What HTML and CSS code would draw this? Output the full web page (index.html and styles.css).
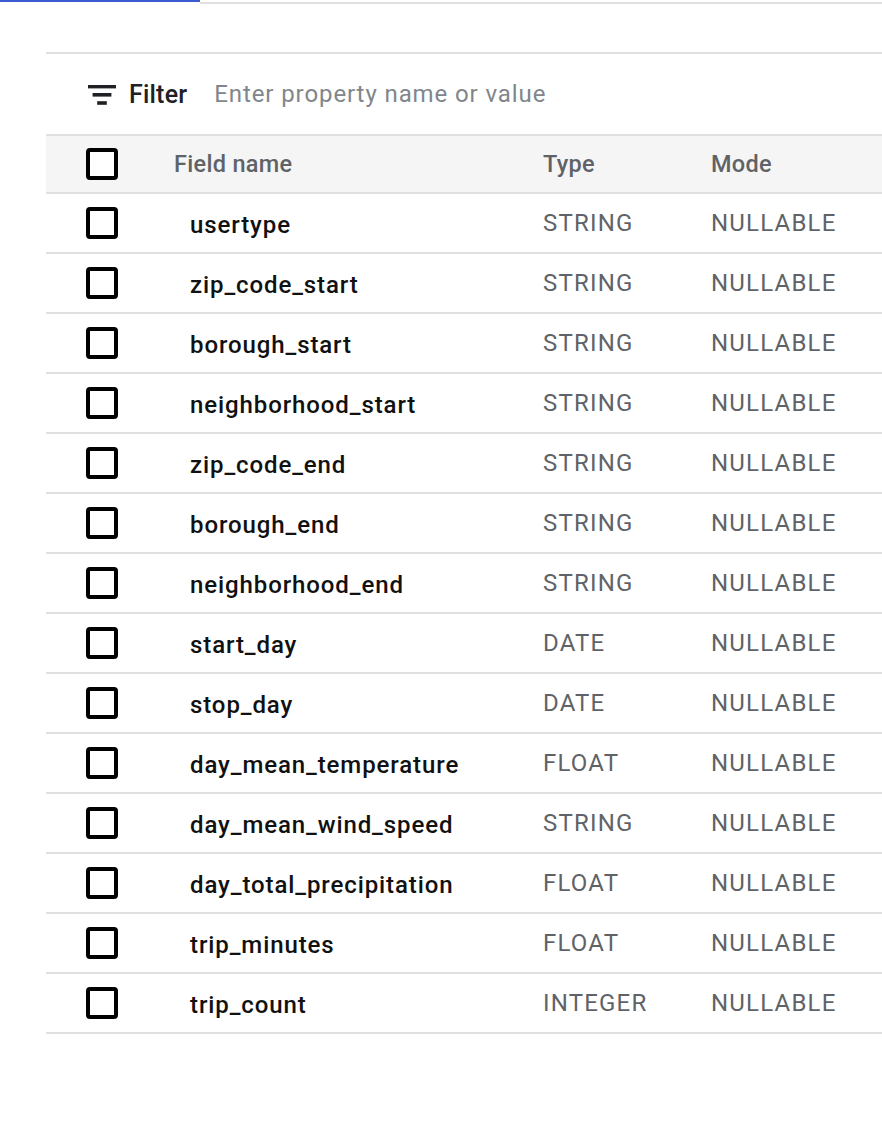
FILE: index.html
```html
<!DOCTYPE html>
<html>
<head>
<meta charset="utf-8">
<link rel="stylesheet" href="styles.css">
</head>
<body>
<div class="tabbar"><div class="tab-active"></div><div class="tab-rest"></div></div>
<div class="panel">
  <div class="filter">
    <svg class="filter-icon" width="28" height="20" viewBox="0 0 28 20"><rect x="0" y="0" width="28" height="3.4" fill="#202124"/><rect x="4.6" y="8" width="18.8" height="3.6" fill="#202124"/><rect x="9.2" y="16.2" width="9.6" height="3.6" fill="#202124"/></svg>
    <span class="filter-label">Filter</span>
    <span class="filter-placeholder">Enter property name or value</span>
  </div>
  <div class="table">
    <div class="row head">
      <span class="cb"></span><span class="h">Field name</span><span class="h">Type</span><span class="h">Mode</span>
    </div>
    <div class="row"><span class="cb"></span><span class="name">usertype</span><span class="cell">STRING</span><span class="cell">NULLABLE</span></div>
    <div class="row"><span class="cb"></span><span class="name">zip_code_start</span><span class="cell">STRING</span><span class="cell">NULLABLE</span></div>
    <div class="row"><span class="cb"></span><span class="name">borough_start</span><span class="cell">STRING</span><span class="cell">NULLABLE</span></div>
    <div class="row"><span class="cb"></span><span class="name">neighborhood_start</span><span class="cell">STRING</span><span class="cell">NULLABLE</span></div>
    <div class="row"><span class="cb"></span><span class="name">zip_code_end</span><span class="cell">STRING</span><span class="cell">NULLABLE</span></div>
    <div class="row"><span class="cb"></span><span class="name">borough_end</span><span class="cell">STRING</span><span class="cell">NULLABLE</span></div>
    <div class="row"><span class="cb"></span><span class="name">neighborhood_end</span><span class="cell">STRING</span><span class="cell">NULLABLE</span></div>
    <div class="row"><span class="cb"></span><span class="name">start_day</span><span class="cell">DATE</span><span class="cell">NULLABLE</span></div>
    <div class="row"><span class="cb"></span><span class="name">stop_day</span><span class="cell">DATE</span><span class="cell">NULLABLE</span></div>
    <div class="row"><span class="cb"></span><span class="name">day_mean_temperature</span><span class="cell">FLOAT</span><span class="cell">NULLABLE</span></div>
    <div class="row"><span class="cb"></span><span class="name">day_mean_wind_speed</span><span class="cell">STRING</span><span class="cell">NULLABLE</span></div>
    <div class="row"><span class="cb"></span><span class="name">day_total_precipitation</span><span class="cell">FLOAT</span><span class="cell">NULLABLE</span></div>
    <div class="row"><span class="cb"></span><span class="name">trip_minutes</span><span class="cell">FLOAT</span><span class="cell">NULLABLE</span></div>
    <div class="row"><span class="cb"></span><span class="name">trip_count</span><span class="cell">INTEGER</span><span class="cell">NULLABLE</span></div>
  </div>
</div>
</body>
</html>
```
FILE: styles.css
```css
html, body {
  margin: 0;
  padding: 0;
  background: #ffffff;
  font-family: Roboto, "Liberation Sans", sans-serif;
  overflow: hidden;
}

.tabbar {
  display: flex;
  height: 4px;
}
.tab-active {
  width: 200px;
  height: 2px;
  background: #3c5bd3;
}
.tab-rest {
  flex: 1;
  margin-top: 2px;
  height: 2px;
  background: #e0e0e0;
}

.panel {
  margin-top: 48px;
  margin-left: 46px;
  border-top: 2px solid #e0e0e0;
}

.filter {
  height: 80px;
  display: flex;
  align-items: center;
  padding-left: 42px;
}
.filter-icon {
  display: block;
  margin-right: 13px;
  margin-top: 1px;
}
.filter-label {
  font-size: 25px;
  font-weight: 500;
  color: #202124;
  margin-right: 27px;
  letter-spacing: 0.2px;
}
.filter-placeholder {
  font-size: 24px;
  color: #80868b;
  letter-spacing: 0.9px;
}

.table {
  border-top: 2px solid #e0e0e0;
}

.row {
  display: grid;
  grid-template-columns: 88px 369px 168px auto;
  align-items: center;
  height: 58px;
  padding-left: 40px;
  border-bottom: 2px solid #e0e0e0;
}
.row.head {
  height: 56px;
  background: #f5f5f5;
}

.cb {
  width: 32px;
  height: 32px;
  box-sizing: border-box;
  border: 4px solid #000;
  border-radius: 4px;
  background: #fff;
}

.h {
  font-size: 23.5px;
  font-weight: 500;
  color: #5f6368;
  letter-spacing: 0.3px;
}

.name {
  padding-left: 16px;
  font-size: 24px;
  font-weight: 500;
  color: #111;
  padding-top: 4px;
  letter-spacing: 0.9px;
}

.cell {
  font-size: 24px;
  color: #5f6368;
  letter-spacing: 1.2px;
}
```
